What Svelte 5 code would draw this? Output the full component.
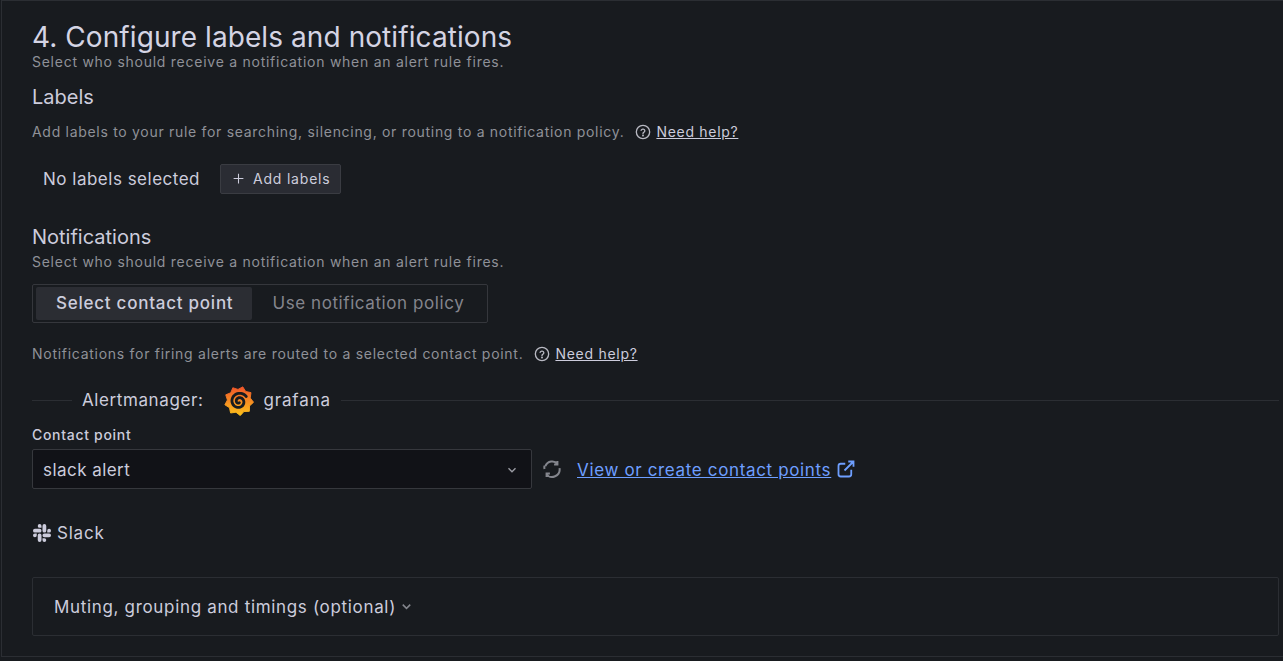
<script>
  const teeth = 9;
  let gear = "";
  for (let i = 0; i < teeth * 2; i++) {
    const r = i % 2 ? 12.4 : 15.6;
    const a = (i / (teeth * 2)) * Math.PI * 2 - Math.PI / 2.4;
    gear += (i ? "L" : "M") + (16 + r * Math.cos(a)).toFixed(2) + " " + (16 + r * Math.sin(a)).toFixed(2);
  }
  gear += "Z";

  let spiral = "";
  for (let i = 0; i <= 72; i++) {
    const t = i / 72;
    const r = 9.4 - t * 8;
    const a = -0.6 - t * Math.PI * 3.4;
    spiral += (i ? "L" : "M") + (16 + r * Math.cos(a)).toFixed(2) + " " + (16.5 + r * Math.sin(a)).toFixed(2);
  }

  const qCircle = "M9.2 9.5a2.9 2.9 0 0 1 5.6.8c0 1.9-2.8 2.3-2.8 3.9";
</script>

<div class="panel">
  <h2>4. Configure labels and notifications</h2>
  <p class="sub first">Select who should receive a notification when an alert rule fires.</p>
  <h3 class="labels">Labels</h3>
  <div class="help labels-help">
    <span>Add labels to your rule for searching, silencing, or routing to a notification policy.</span>
    <svg class="q" viewBox="0 0 24 24" fill="none" stroke="currentColor" stroke-width="2"><circle cx="12" cy="12" r="10"/><path d={qCircle} stroke-linecap="round"/><circle cx="12" cy="17.3" r=".6"/></svg>
    <a href="#help">Need help?</a>
  </div>
  <div class="none-row">
    <span class="none">No labels selected</span>
    <button class="add">
      <svg viewBox="0 0 16 16" fill="none" stroke="currentColor" stroke-width="1.3"><path d="M8 2v12M2 8h12"/></svg>
      Add labels
    </button>
  </div>
  <h3 class="notif">Notifications</h3>
  <p class="sub notif-sub">Select who should receive a notification when an alert rule fires.</p>
  <div class="radio">
    <span class="opt active">Select contact point</span>
    <span class="opt second">Use notification policy</span>
  </div>
  <div class="help notif-help">
    <span>Notifications for firing alerts are routed to a selected contact point.</span>
    <svg class="q" viewBox="0 0 24 24" fill="none" stroke="currentColor" stroke-width="2"><circle cx="12" cy="12" r="10"/><path d={qCircle} stroke-linecap="round"/><circle cx="12" cy="17.3" r=".6"/></svg>
    <a href="#help">Need help?</a>
  </div>
  <div class="divider">
    <span class="am">Alertmanager:</span>
    <span class="logo-wrap">
      <svg class="logo" viewBox="0 0 32 32">
        <defs><linearGradient id="gf" x1="0" y1="1" x2="0" y2="0"><stop offset="0" stop-color="#fcc21a"/><stop offset="1" stop-color="#f0552a"/></linearGradient></defs>
        <path d={gear} fill="url(#gf)" stroke="url(#gf)" stroke-linejoin="round"/>
        <path d={spiral} fill="none" stroke="#181b1f" stroke-width="3" stroke-linecap="round"/>
      </svg>
    </span>
    <span class="gf">grafana</span>
  </div>
  <div class="cp-label">Contact point</div>
  <div class="cp-row">
    <div class="select">
      <span>slack alert</span>
      <svg viewBox="0 0 16 16" fill="none" stroke="currentColor" stroke-width="1.6"><path d="M4 6l4 4 4-4"/></svg>
    </div>
    <svg class="sync" viewBox="0 0 24 24" fill="none" stroke="currentColor" stroke-width="2.4"><path d="M4 8.5A9 9 0 0 1 19 6M21 11a9 9 0 0 1-16 7M18.5 2.5v4h-4M5.5 21.5v-4h4M3 8a9.5 9.5 0 0 0 0 4"/></svg>
    <a class="link" href="#cp">View or create contact points</a>
    <svg class="ext" viewBox="0 0 24 24" fill="none" stroke="currentColor" stroke-width="2.4"><path d="M11 5H5a3 3 0 0 0-3 3v11a3 3 0 0 0 3 3h11a3 3 0 0 0 3-3v-6M10 14 22 2M15 2h7v7"/></svg>
  </div>
  <div class="slack">
    <svg viewBox="0 0 24 24" fill="currentColor"><path d="M5.042 15.165a2.528 2.528 0 0 1-2.52 2.523A2.528 2.528 0 0 1 0 15.165a2.527 2.527 0 0 1 2.522-2.52h2.52v2.52zM6.313 15.165a2.527 2.527 0 0 1 2.521-2.52 2.527 2.527 0 0 1 2.521 2.52v6.313A2.528 2.528 0 0 1 8.834 24a2.528 2.528 0 0 1-2.521-2.522v-6.313zM8.834 5.042a2.528 2.528 0 0 1-2.521-2.52A2.528 2.528 0 0 1 8.834 0a2.528 2.528 0 0 1 2.521 2.522v2.52H8.834zM8.834 6.313a2.528 2.528 0 0 1 2.521 2.521 2.528 2.528 0 0 1-2.521 2.521H2.522A2.528 2.528 0 0 1 0 8.834a2.528 2.528 0 0 1 2.522-2.521h6.312zM18.956 8.834a2.528 2.528 0 0 1 2.522-2.521A2.528 2.528 0 0 1 24 8.834a2.528 2.528 0 0 1-2.522 2.521h-2.522V8.834zM17.688 8.834a2.528 2.528 0 0 1-2.523 2.521 2.527 2.527 0 0 1-2.52-2.521V2.522A2.527 2.527 0 0 1 15.165 0a2.528 2.528 0 0 1 2.523 2.522v6.312zM15.165 18.956a2.528 2.528 0 0 1 2.523 2.522A2.528 2.528 0 0 1 15.165 24a2.527 2.527 0 0 1-2.52-2.522v-2.522h2.52zM15.165 17.688a2.527 2.527 0 0 1-2.52-2.523 2.526 2.526 0 0 1 2.52-2.52h6.313A2.527 2.527 0 0 1 24 15.165a2.528 2.528 0 0 1-2.522 2.523h-6.313z"/></svg>
    <span>Slack</span>
  </div>
  <div class="muting">
    <span>Muting, grouping and timings (optional)</span>
    <svg viewBox="0 0 16 16" fill="none" stroke="currentColor" stroke-width="1.6"><path d="M4 6l4 4 4-4"/></svg>
  </div>
</div>

<style>
  :global(body) { margin: 0; background: #181b1f; font-family: Inter, "Noto Sans", sans-serif; overflow: hidden; }
  .panel {
    box-sizing: border-box; width: 1282px; height: 657px; margin-left: 1px; padding: 21px 4px 0 30px;
    border: 1px solid #2b2e33; border-right: 0; background: #181b1f; color: #ccccdc;
  }
  h2 { margin: 0; font-size: 28px; line-height: 30px; font-weight: 400; letter-spacing: 0.08px; color: #d4d4e4; }
  h3 { margin: 0; font-size: 20px; line-height: 24px; font-weight: 400; color: #ccccdc; }
  .sub { margin: 0; font-size: 14px; line-height: 18px; letter-spacing: 0.74px; color: #8f9198; }
  .first { margin-top: 1px; }
  .notif-sub { margin-top: 4px; }
  .labels { margin-top: 14px; }
  .help { display: flex; align-items: center; font-size: 14px; line-height: 18px; letter-spacing: 0.7px; color: #8f9198; }
  .labels-help { margin-top: 14px; }
  .help a { color: #ccccdc; text-decoration: underline; margin-left: 5px; }
  .q { width: 16px; height: 16px; margin-left: 11px; color: #b8b9c2; }
  .none-row { display: flex; align-items: center; margin-top: 23px; padding-left: 11px; }
  .none { font-size: 17px; letter-spacing: 0.5px; color: #ccccdc; }
  .add {
    display: flex; align-items: center; gap: 8px; margin-left: 20px; height: 30px; padding: 0 9px 1px 11px; box-sizing: border-box;
    background: #2a2c33; border: 1px solid #3a3c42; border-radius: 2px; color: #ccccdc; font: 14px Inter, sans-serif; letter-spacing: 0.8px;
  }
  .add svg { width: 13px; height: 13px; }
  .notif { margin-top: 31px; }
  .radio {
    display: flex; align-items: center; box-sizing: border-box; width: 456px; height: 39px; margin-top: 13px; padding: 0 3px;
    border: 1px solid #35373c; border-radius: 2px;
  }
  .opt { font-size: 17px; color: #84858d; line-height: 33px; }
  .opt.active { background: #2b2d33; color: #ccccdc; font-weight: 500; border-radius: 2px; padding: 0 19px 0 20px; letter-spacing: 0.75px; }
  .opt.second { padding-left: 20px; letter-spacing: 0.58px; }
  .notif-help { margin-top: 22px; letter-spacing: 0.72px; }
  .divider { position: relative; display: flex; align-items: center; height: 30px; margin-top: 22px; padding-left: 40px; }
  .divider::before { content: ""; position: absolute; left: 0; right: 0; top: 15px; height: 1px; background: #2b2e33; }
  .am, .gf, .logo-wrap { position: relative; background: #181b1f; }
  .am { font-size: 17px; padding-left: 10px; letter-spacing: 0.6px; color: #ccccdc; }
  .logo-wrap { display: flex; padding: 1px 9px 0 21px; }
  .logo { width: 30px; height: 30px; display: block; }
  .gf { font-size: 17px; padding-right: 10px; letter-spacing: 0.85px; color: #ccccdc; }
  .cp-label { margin-top: 11px; font-size: 14px; font-weight: 500; line-height: 18px; letter-spacing: 0.7px; color: #ccccdc; }
  .cp-row { display: flex; align-items: center; margin-top: 5px; }
  .select {
    display: flex; align-items: center; justify-content: space-between; box-sizing: border-box; width: 500px; height: 40px;
    padding: 1px 12px 0 10px; background: #111217; border: 1px solid #36383d; border-radius: 2px; font-size: 17px; letter-spacing: 0.45px; color: #ccccdc;
  }
  .select svg { width: 14px; height: 14px; color: #9a9ba3; }
  .sync { width: 20px; height: 20px; margin-left: 10px; color: #84868d; }
  .link { margin: 2px 0 0 15px; font-size: 17px; letter-spacing: 0.65px; color: #6e9fff; text-decoration: underline; }
  .ext { width: 18px; height: 18px; margin-left: 6px; color: #6e9fff; }
  .slack { display: flex; align-items: center; gap: 6px; margin-top: 32px; font-size: 17px; line-height: 24px; letter-spacing: 0.8px; color: #ccccdc; }
  .slack svg { width: 18px; height: 18px; margin-left: 1px; }
  .muting {
    display: flex; align-items: center; gap: 3px; box-sizing: border-box; height: 59px; margin-top: 32px; padding-left: 21px;
    border: 1px solid #2b2e33; border-radius: 2px; font-size: 17px; letter-spacing: 0.67px; color: #ccccdc;
  }
  .muting svg { width: 15px; height: 15px; color: #84868d; }
</style>
